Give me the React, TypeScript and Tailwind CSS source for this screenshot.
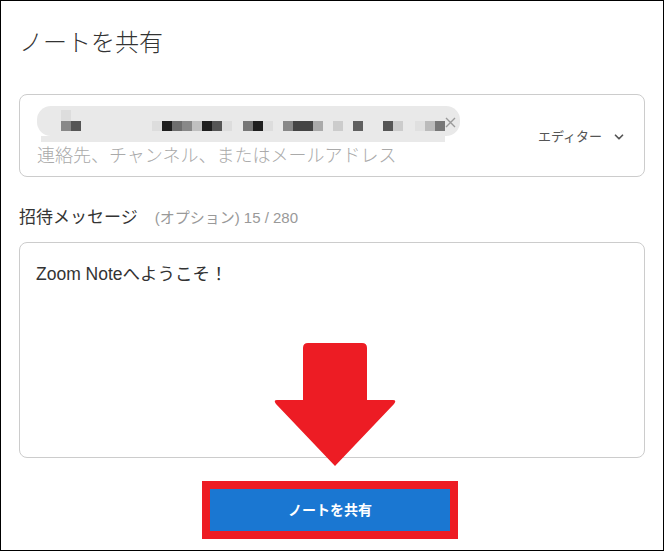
import React from 'react';
import { ChevronDown } from 'lucide-react';

// pixelated name inside the recipient chip: [x offset in chip, colour]
const mosaic: [number, string][] = [
  [24, '#888888'], [34, '#555555'],
  [115, '#dddddd'], [125, '#1e1e1e'], [135, '#6e6e6e'], [145, '#888888'], [155, '#c0c0c0'],
  [165, '#1e1e1e'], [175, '#555555'], [185, '#dddddd'],
  [206, '#777777'], [216, '#1e1e1e'], [226, '#dddddd'],
  [246, '#888888'], [256, '#444444'], [266, '#444444'], [276, '#aaaaaa'],
  [296, '#cccccc'], [316, '#606060'],
  [346, '#555555'], [356, '#cccccc'],
  [378, '#e0e0e0'], [388, '#bbbbbb'], [398, '#777777'],
];

const jp = { fontFamily: '"Liberation Sans", "Noto Sans CJK JP", sans-serif' };

export default function App() {
  return (
    <div className="relative w-[664px] h-[551px] border border-black bg-white px-[18px] pt-[27px] flex flex-col" style={jp}>
      <h1 className="text-[24px] leading-[30px] text-[#333] font-light">ノートを共有</h1>

      {/* recipients */}
      <div className="mt-[36px] h-[83px] rounded-lg border border-[#cccccc] flex items-center pl-[17px] pr-[18px]">
        <div className="flex flex-col pt-[1px]">
          <div className="relative w-[423px] h-[30px] rounded-[14px] bg-[#e9e9e9]">
            <div className="absolute left-[24px] top-[4px] w-[10px] h-[11px] bg-[#dddddd]" />
            {mosaic.map(([x, c], i) => (
              <div key={i} className="absolute top-[15px] w-[10px] h-[10px]" style={{ left: x, backgroundColor: c }} />
            ))}
            <svg className="absolute left-[408px] top-[11px]" width="11" height="11" viewBox="0 0 11 11">
              <path d="M1 1 L10 10 M10 1 L1 10" stroke="#9a9a9a" strokeWidth="1.4" />
            </svg>
          </div>
          <div className="w-[404px] h-[6px] ml-[4px] bg-[#e9e9e9]" />
          <div className="mt-[3px] text-[18px] leading-[22px] text-[#aaaaaa] font-light">連絡先、チャンネル、またはメールアドレス</div>
        </div>
        <div className="ml-auto flex items-center gap-[10px] text-[13px] text-[#555] pt-[2px]">
          <span>エディター</span>
          <ChevronDown size={14} strokeWidth={3} className="text-[#555]" />
        </div>
      </div>

      {/* message */}
      <div className="mt-[29px] flex items-baseline gap-[17px]">
        <span className="text-[17px] leading-[24px] text-[#333]">招待メッセージ</span>
        <span className="text-[15px] text-[#999]">(オプション) 15 / 280</span>
      </div>
      <div className="mt-[12px] h-[216px] rounded-lg border border-[#cccccc] px-[16px] pt-[19px]">
        <p className="text-[17.5px] leading-[24px] text-[#333]">Zoom Noteへようこそ！</p>
      </div>

      <div className="mt-[23px] ml-[183px] w-[256px] h-[58px] border-8 border-[#ed1c24]">
        <button className="w-full h-full bg-[#1a77d2] text-white text-[14px] font-bold">ノートを共有</button>
      </div>

      {/* annotation arrow */}
      <svg className="absolute left-[272px] top-[341px]" width="124" height="125" viewBox="0 0 124 125">
        <path
          d="M30 6 Q30 1 35 1 L89 1 Q94 1 94 6 L94 58 L120 58 Q124 58 121 62 L62 124 L3 62 Q0 58 4 58 L30 58 Z"
          fill="#ed1c24"
        />
      </svg>
    </div>
  );
}
